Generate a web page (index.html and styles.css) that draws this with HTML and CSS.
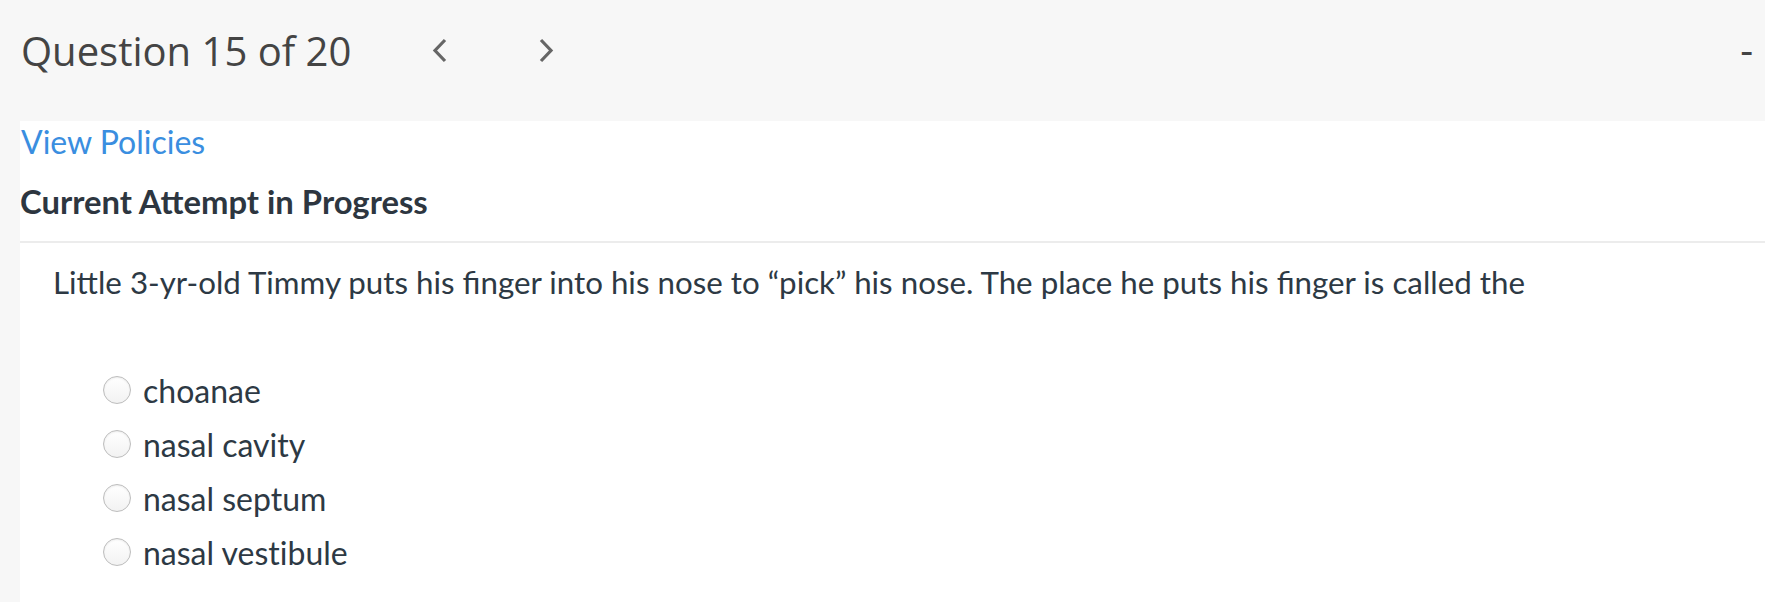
FILE: index.html
```html
<!DOCTYPE html>
<html>
<head>
<meta charset="utf-8">
<link rel="stylesheet" href="styles.css">
</head>
<body>
<header class="topbar">
  <h1 class="q-title">Question 15 of 20</h1>
  <nav class="q-nav">
    <span class="nav-btn"><svg width="16" height="25" viewBox="0 0 16 25"><path d="M13 2 L3 12.5 L13 23" fill="none" stroke="#666" stroke-width="3.2"/></svg></span>
    <span class="nav-btn"><svg width="16" height="25" viewBox="0 0 16 25"><path d="M3 2 L13 12.5 L3 23" fill="none" stroke="#666" stroke-width="3.2"/></svg></span>
  </nav>
  <span class="collapse">-</span>
</header>
<main class="panel">
  <a class="policies" href="#">View Policies</a>
  <h2 class="attempt">Current Attempt in Progress</h2>
  <div class="question">
    <p class="q-text">Little 3-yr-old Timmy puts his finger into his nose to “pick” his nose. The place he puts his finger is called the</p>
    <ul class="options">
      <li class="option"><span class="radio"></span><span class="label">choanae</span></li>
      <li class="option"><span class="radio"></span><span class="label">nasal cavity</span></li>
      <li class="option"><span class="radio"></span><span class="label">nasal septum</span></li>
      <li class="option"><span class="radio"></span><span class="label">nasal vestibule</span></li>
    </ul>
  </div>
</main>
</body>
</html>
```

FILE: styles.css
```css
html, body {
  margin: 0;
  padding: 0;
  background: #f7f7f7;
}
body {
  width: 1765px;
  height: 602px;
  overflow: hidden;
}
.topbar {
  height: 121px;
  display: flex;
  align-items: center;
  padding-left: 21px;
  padding-right: 12px;
  box-sizing: border-box;
}
.q-title {
  margin: 0;
  font-family: "Open Sans", sans-serif;
  font-weight: 400;
  font-size: 40px;
  color: #444;
  line-height: 1;
  position: relative;
  top: -10px;
}
.q-nav {
  display: flex;
  gap: 90px;
  margin-left: 81px;
  position: relative;
  top: -10px;
}
.nav-btn {
  display: flex;
  width: 16px;
  height: 25px;
}
.collapse {
  margin-left: auto;
  font-family: "Open Sans", sans-serif;
  font-size: 40px;
  line-height: 1;
  color: #444;
  position: relative;
  top: -12px;
}
.panel {
  margin-left: 20px;
  background: #fff;
  height: 481px;
  font-family: Lato, sans-serif;
}
.policies {
  display: block;
  font-size: 32px;
  line-height: 42px;
  color: #3a8ee0;
  text-decoration: none;
  padding-left: 1px;
}
.attempt {
  margin: 0;
  font-size: 32.8px;
  font-weight: 700;
  line-height: 78px;
  color: #2d3640;
  border-bottom: 2px solid #ececec;
}
.question {
  padding-left: 33px;
}
.q-text {
  margin: 0;
  padding-top: 17px;
  font-size: 31.3px;
  line-height: 44px;
  color: #2d3944;
}
.options {
  list-style: none;
  margin: 0;
  padding: 59px 0 0 50px;
}
.option {
  display: flex;
  align-items: center;
  height: 54px;
  font-size: 32px;
  color: #2d3944;
  font-variant-ligatures: none;
}
.radio {
  width: 26px;
  height: 26px;
  border-radius: 50%;
  border: 1px solid #bdbdbd;
  background: linear-gradient(#fff, #f2f2f2);
  box-shadow: inset 0 1px 2px rgba(0,0,0,0.08);
  margin-right: 12px;
}
```
